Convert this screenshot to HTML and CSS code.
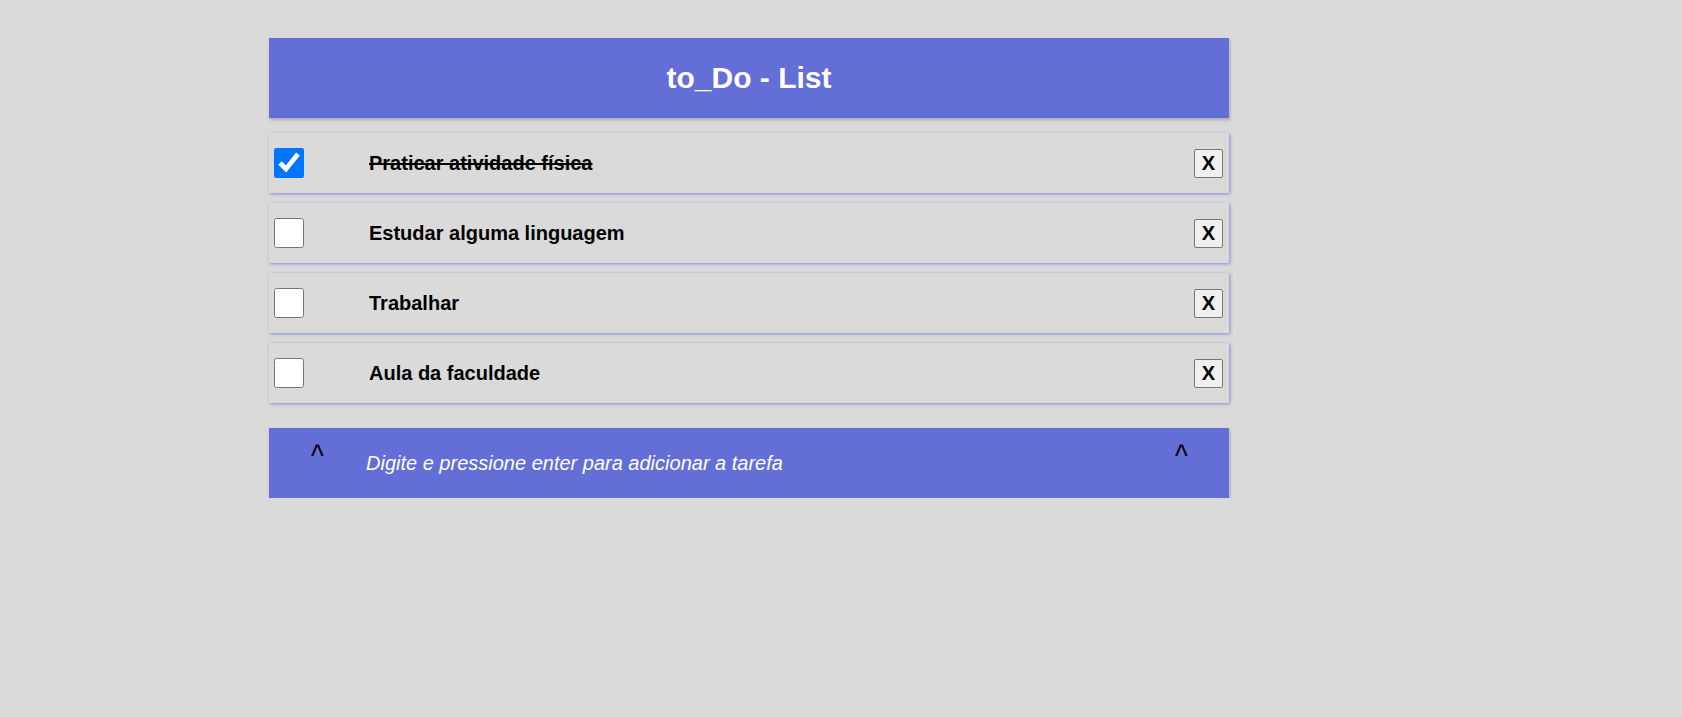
FILE: index.html
```html
<!DOCTYPE html>
<html lang="pt-BR">
<head>
<meta charset="utf-8">
<title>to_Do - List</title>
<link rel="stylesheet" href="styles.css">
</head>
<body>
  <div class="app">
    <header class="header">
      <h1 class="title">to_Do - List</h1>
    </header>
    <ul class="list">
      <li class="item">
        <input class="check" type="checkbox" checked>
        <span class="label done">Praticar atividade física</span>
        <button class="remove">X</button>
      </li>
      <li class="item">
        <input class="check" type="checkbox">
        <span class="label">Estudar alguma linguagem</span>
        <button class="remove">X</button>
      </li>
      <li class="item">
        <input class="check" type="checkbox">
        <span class="label">Trabalhar</span>
        <button class="remove">X</button>
      </li>
      <li class="item">
        <input class="check" type="checkbox">
        <span class="label">Aula da faculdade</span>
        <button class="remove">X</button>
      </li>
    </ul>
    <div class="footer">
      <span class="caret">^</span>
      <input class="new-task" type="text" placeholder="Digite e pressione enter para adicionar a tarefa">
      <span class="caret">^</span>
    </div>
  </div>
</body>
</html>
```

FILE: styles.css
```css
html, body {
  margin: 0;
  padding: 0;
  background: #dadada;
  font-family: "Liberation Sans", Arial, sans-serif;
}

.app {
  width: 960px;
  margin: 38px 0 0 269px;
}

.header {
  height: 80px;
  background: #636ed6;
  display: flex;
  align-items: center;
  justify-content: center;
  box-shadow: 1px 2px 3px rgba(80, 80, 120, 0.35);
}

.title {
  margin: 0;
  font-size: 30px;
  font-weight: bold;
  color: #ffffff;
}

.list {
  list-style: none;
  margin: 15px 0 0 0;
  padding: 0;
  display: flex;
  flex-direction: column;
  gap: 10px;
}

.item {
  height: 60px;
  display: flex;
  align-items: center;
  padding: 0 6px 0 5px;
  box-shadow: 1px 1px 3px rgba(99, 110, 214, 0.75);
}

.check {
  width: 30px;
  height: 30px;
  margin: 0;
}

.label {
  flex: 1;
  margin-left: 65px;
  font-size: 20px;
  font-weight: bold;
  color: #000000;
}

.done {
  text-decoration: line-through;
}

.remove {
  width: 29px;
  height: 29px;
  padding: 0;
  border: 1px solid #767676;
  border-radius: 2px;
  background: #efefef;
  color: #000000;
  font-family: "Liberation Sans", Arial, sans-serif;
  font-size: 20px;
  font-weight: bold;
}

.footer {
  margin-top: 25px;
  height: 70px;
  background: #636ed6;
  display: flex;
  align-items: flex-start;
  padding: 0 41px;
  box-shadow: 1px 2px 3px rgba(80, 80, 120, 0.35);
}

.caret {
  margin-top: 9px;
  font-size: 32px;
  color: #000000;
  width: 14px;
  transform: scaleX(0.85);
}

.new-task {
  flex: 1;
  margin: 20px 42px 0 42px;
  height: 30px;
  padding: 0;
  border: none;
  outline: none;
  background: transparent;
  color: #ffffff;
  font-family: "Liberation Sans", Arial, sans-serif;
  font-size: 20px;
  font-style: italic;
}

.new-task::placeholder {
  color: #ffffff;
  opacity: 1;
}
```
